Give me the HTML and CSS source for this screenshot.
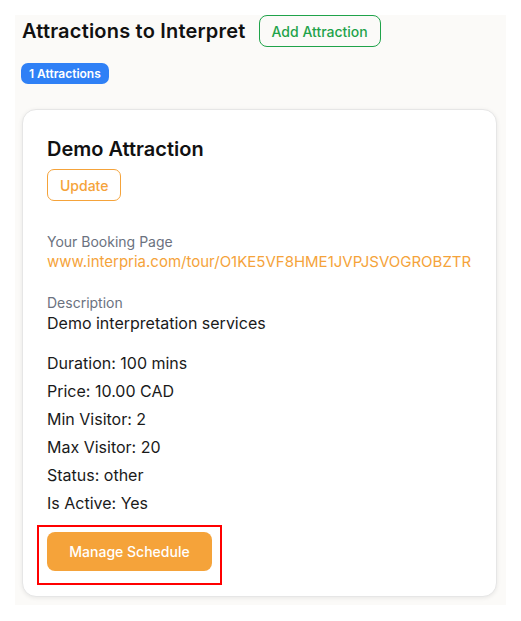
FILE: index.html
```html
<!DOCTYPE html>
<html lang="en">
<head>
    <meta charset="UTF-8">
    <meta name="viewport" content="width=device-width, initial-scale=1.0">
    <title>Attractions to Interpret</title>
    <link rel="stylesheet" href="styles.css">
</head>
<body>
    <div class="panel">
        <div class="panel-header">
            <h1>Attractions to Interpret</h1>
            <button class="btn btn-green">Add Attraction</button>
        </div>
        <span class="badge">1 Attractions</span>

        <div class="card">
            <h2 class="card-title">Demo Attraction</h2>
            <button class="btn btn-orange-outline">Update</button>

            <div class="field-label booking-label">Your Booking Page</div>
            <a class="booking-link" href="#">www.interpria.com/tour/O1KE5VF8HME1JVPJSVOGROBZTR</a>

            <div class="field-label desc-label">Description</div>
            <p class="desc">Demo interpretation services</p>

            <div class="details">
                <p>Duration: 100 mins</p>
                <p>Price: 10.00 CAD</p>
                <p>Min Visitor: 2</p>
                <p>Max Visitor: 20</p>
                <p>Status: other</p>
                <p>Is Active: Yes</p>
            </div>

            <button class="btn btn-orange highlighted">Manage Schedule</button>
        </div>
    </div>
</body>
</html>
```

FILE: styles.css
```css
body {
    margin: 0;
    background: #ffffff;
    font-family: Inter, "Noto Sans", sans-serif;
    color: #1a1a1a;
}
.panel {
    margin: 15px;
    width: 475px;
    padding: 0 9px 8px 7px;
    background: #fbfaf8;
}
.panel-header {
    display: flex;
    align-items: center;
    gap: 13px;
    height: 32px;
}
h1 {
    margin: 0;
    font-size: 20px;
    font-weight: 600;
    letter-spacing: 0.2px;
    color: #111111;
}
.btn {
    font-family: inherit;
    font-size: 14px;
    font-weight: 500;
    cursor: pointer;
    background: none;
}
.btn-green {
    height: 32px;
    padding: 0 12px;
    border: 1px solid #1fa34a;
    border-radius: 8px;
    color: #1fa34a;
}
.badge {
    display: inline-block;
    margin: 16px 0 0 -1px;
    padding: 0 8px;
    height: 21px;
    line-height: 21px;
    border-radius: 7px;
    background: #2f80f6;
    color: #ffffff;
    font-size: 12px;
    font-weight: 600;
}
.card {
    margin-top: 25px;
    background: #ffffff;
    border: 1px solid #e6e6e6;
    border-radius: 14px;
    box-shadow: 0 1px 4px rgba(0, 0, 0, 0.08);
    padding: 25px 24px 25px;
}
.card-title {
    margin: 0;
    font-size: 20px;
    line-height: 28px;
    font-weight: 600;
    color: #111111;
}
.btn-orange-outline {
    display: block;
    margin-top: 6px;
    height: 32px;
    padding: 0 12px;
    border: 1px solid #f5a33a;
    border-radius: 7px;
    color: #f5a33a;
}
.field-label {
    font-size: 14px;
    line-height: 19px;
    color: #6b7280;
}
.booking-label {
    margin-top: 31px;
}
.booking-link {
    display: block;
    font-size: 15px;
    line-height: 22px;
    color: #f5a33a;
    text-decoration: none;
}
.desc-label {
    margin-top: 20px;
}
.desc {
    margin: 0;
    font-size: 16px;
    line-height: 22px;
}
.details {
    margin-top: 15px;
}
.details p {
    margin: 0;
    font-size: 16px;
    line-height: 28px;
}
.btn-orange {
    position: relative;
    display: block;
    margin-top: 15px;
    height: 39px;
    width: 165px;
    border: none;
    border-radius: 8px;
    background: #f5a33a;
    color: #ffffff;
}
.highlighted::after {
    content: "";
    position: absolute;
    top: -7px;
    left: -10px;
    right: -10px;
    bottom: -14px;
    border: 2px solid #ff0000;
}
```
